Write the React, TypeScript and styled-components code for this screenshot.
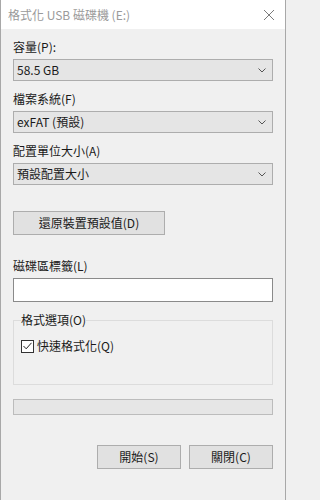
import styled, { createGlobalStyle } from "styled-components";

const GlobalStyle = createGlobalStyle`
  html, body {
    margin: 0;
    padding: 0;
    background: #f0f0f0;
  }
  * {
    box-sizing: border-box;
  }
`;

const Window = styled.div`
  width: 286px;
  height: 500px;
  background: #f0f0f0;
  border-left: 1px solid #a8a8a8;
  border-right: 1px solid #a8a8a8;
  font-family: "Noto Sans CJK TC", "Noto Sans", sans-serif;
  font-size: 12px;
  color: #1a1a1a;
  overflow: hidden;
`;

const TitleBar = styled.div`
  height: 29px;
  background: #ffffff;
  display: flex;
  align-items: center;
  justify-content: space-between;
  padding-left: 7px;
`;

const Title = styled.span`
  color: #9a9a9a;
  font-size: 12px;
  line-height: 16px;
`;

const CloseButton = styled.button`
  width: 32px;
  height: 29px;
  border: none;
  background: transparent;
  padding: 0;
  display: flex;
  align-items: center;
  justify-content: center;
`;

const Body = styled.div`
  padding: 10px 12px 0;
  display: flex;
  flex-direction: column;
`;

const Field = styled.div<{ $top?: number }>`
  display: flex;
  flex-direction: column;
  gap: 4px;
  margin-top: ${(p) => p.$top ?? 0}px;
  margin-bottom: 10px;
`;

const Label = styled.label`
  line-height: 16px;
  height: 16px;
`;

const Select = styled.div`
  height: 22px;
  border: 1px solid #adadad;
  background: #e5e5e5;
  display: flex;
  align-items: center;
  justify-content: space-between;
  padding: 0 6px 0 3px;
  line-height: 16px;
`;

const TextBox = styled.div`
  height: 24px;
  border: 1px solid #8a8a8a;
  background: #ffffff;
`;

const Button = styled.button<{ $width: number }>`
  width: ${(p) => p.$width}px;
  height: 24px;
  border: 1px solid #adadad;
  background: #e1e1e1;
  font-family: inherit;
  font-size: 12px;
  color: #1a1a1a;
  padding: 0;
  line-height: 16px;
`;

const ResetRow = styled.div`
  margin-top: 16px;
`;

const Group = styled.fieldset`
  margin: 0;
  border: 1px solid #dcdcdc;
  padding: 0 7px 30px;
  min-inline-size: 0;
`;

const Legend = styled.legend`
  padding: 0;
  line-height: 16px;
`;

const CheckRow = styled.div`
  display: flex;
  align-items: center;
  gap: 3px;
  margin-top: 10px;
  line-height: 16px;
`;

const CheckBox = styled.span`
  width: 13px;
  height: 13px;
  border: 1px solid #333333;
  background: #ffffff;
  display: flex;
  align-items: center;
  justify-content: center;
`;

const Progress = styled.div`
  margin-top: 14px;
  height: 16px;
  border: 1px solid #bcbcbc;
  background: #e6e6e6;
`;

const ButtonRow = styled.div`
  margin-top: 30px;
  display: flex;
  justify-content: flex-end;
  gap: 8px;
`;

function Chevron() {
  return (
    <svg width="8" height="5" viewBox="0 0 8 5">
      <path d="M0.5 0.5 L4 4 L7.5 0.5" fill="none" stroke="#555" strokeWidth="1" />
    </svg>
  );
}

function Dropdown({ value }: { value: string }) {
  return (
    <Select>
      <span>{value}</span>
      <Chevron />
    </Select>
  );
}

export default function App() {
  return (
    <>
      <GlobalStyle />
      <Window>
        <TitleBar>
          <Title>格式化 USB 磁碟機 (E:)</Title>
          <CloseButton>
            <svg width="10" height="10" viewBox="0 0 10 10">
              <path d="M0 0 L10 10 M10 0 L0 10" stroke="#7a7a7a" strokeWidth="1" />
            </svg>
          </CloseButton>
        </TitleBar>
        <Body>
          <Field>
            <Label>容量(P):</Label>
            <Dropdown value="58.5 GB" />
          </Field>
          <Field>
            <Label>檔案系統(F)</Label>
            <Dropdown value="exFAT (預設)" />
          </Field>
          <Field>
            <Label>配置單位大小(A)</Label>
            <Dropdown value="預設配置大小" />
          </Field>
          <ResetRow>
            <Button $width={152}>還原裝置預設值(D)</Button>
          </ResetRow>
          <Field $top={23}>
            <Label>磁碟區標籤(L)</Label>
            <TextBox />
          </Field>
          <Group>
            <Legend>格式選項(O)</Legend>
            <CheckRow>
              <CheckBox>
                <svg width="9" height="8" viewBox="0 0 9 8">
                  <path d="M0.5 4 L3.2 6.8 L8.5 0.8" fill="none" stroke="#222" strokeWidth="1" />
                </svg>
              </CheckBox>
              <span>快速格式化(Q)</span>
            </CheckRow>
          </Group>
          <Progress />
          <ButtonRow>
            <Button $width={84}>開始(S)</Button>
            <Button $width={84}>關閉(C)</Button>
          </ButtonRow>
        </Body>
      </Window>
    </>
  );
}
